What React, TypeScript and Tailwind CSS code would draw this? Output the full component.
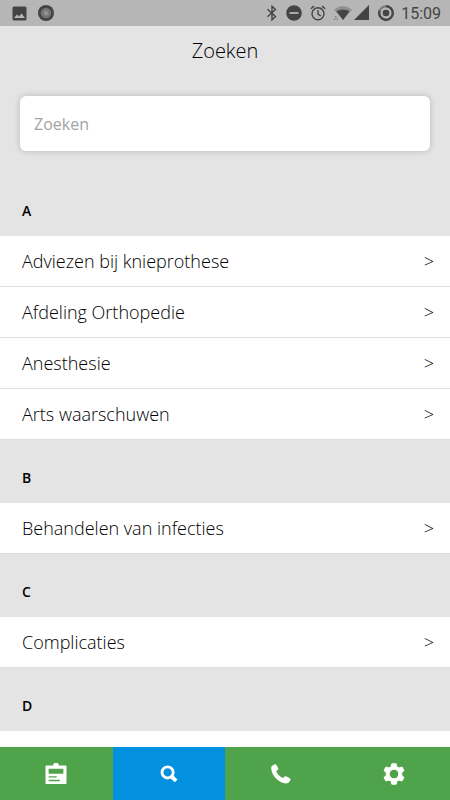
import React from "react";

type Section = { letter: string; items: string[] };

const sections: Section[] = [
  {
    letter: "A",
    items: [
      "Adviezen bij knieprothese",
      "Afdeling Orthopedie",
      "Anesthesie",
      "Arts waarschuwen",
    ],
  },
  { letter: "B", items: ["Behandelen van infecties"] },
  { letter: "C", items: ["Complicaties"] },
  { letter: "D", items: [] },
];

function StatusBar() {
  return (
    <div className="flex h-[26px] shrink-0 items-center justify-between bg-[#b6b6b6] pr-[9px] pl-3 text-[#444444]">
      <div className="flex items-center gap-[11px]">
        <svg className="size-[15px]" viewBox="0 0 15 15" aria-hidden="true">
          <rect x="0.5" y="0.5" width="14" height="14" rx="1.5" fill="currentColor" />
          <path d="M2 12 5 8.5 7 10.5 9.5 7.5 13 12Z" fill="#b6b6b6" />
        </svg>
        <svg className="size-4" viewBox="0 0 16 16" aria-hidden="true">
          <circle cx="8" cy="8" r="8" fill="currentColor" />
          <circle cx="8" cy="8" r="5.3" fill="#747474" />
          <circle cx="8" cy="8" r="2.5" fill="#8f8f8f" />
        </svg>
      </div>
      <div className="flex items-center">
        <svg className="mr-2 h-4 w-3" viewBox="0 0 12 16" fill="none" stroke="currentColor" strokeWidth="1.4" aria-hidden="true">
          <path d="M1.5 4.2 9.5 11.6 6 14.8V1.2L9.5 4.4 1.5 11.8" />
        </svg>
        <svg className="mr-2 size-4" viewBox="0 0 16 16" aria-hidden="true">
          <circle cx="8" cy="8" r="7.8" fill="currentColor" />
          <rect x="3.5" y="7.1" width="9" height="1.8" fill="#b6b6b6" />
        </svg>
        <svg className="mr-2 size-4" viewBox="0 0 16 16" fill="none" stroke="currentColor" strokeWidth="1.4" aria-hidden="true">
          <circle cx="8" cy="8.8" r="6" />
          <path d="M8 5v4.2l2.8 1.7M0.8 3.8 4 1.1M15.2 3.8 12 1.1" />
        </svg>
        <svg className="mr-[2px] h-4 w-[18px]" viewBox="0 0 18 16" aria-hidden="true">
          <path d="M0 4.5Q9-2.5 18 4.5L9 15Z" fill="#8f8f8f" />
          <path d="M2.4 6.3Q9 2.8 15.6 6.3L9 15Z" fill="currentColor" />
          <path d="M1 11h1.5v1.3H1zM0 13.5h1.5v1.3H0zM2.5 13.5H4v1.3H2.5z" fill="#777777" />
        </svg>
        <svg className="mr-[9px] h-4 w-[15px]" viewBox="0 0 15 16" aria-hidden="true">
          <path d="M15 0v15H0Z" fill="currentColor" />
        </svg>
        <svg className="mr-[7px] size-4" viewBox="0 0 16 16" fill="none" aria-hidden="true">
          <circle cx="8" cy="8" r="6.8" stroke="#777777" strokeWidth="2" />
          <path d="M8 1.2A6.8 6.8 0 1 1 1.6 5.7" stroke="currentColor" strokeWidth="2.2" />
          <circle cx="8" cy="8" r="3.3" fill="currentColor" />
        </svg>
        <span className="pt-px font-['Roboto',sans-serif] text-base leading-5">15:09</span>
      </div>
    </div>
  );
}

function ListRow({ label }: { label: string }) {
  return (
    <li>
      <a
        href="#"
        className="flex h-[51px] items-center justify-between border-b border-[#dedede] bg-white pr-4 pl-[22px] text-lg font-[340]"
      >
        <span>{label}</span>
        <span aria-hidden="true">&gt;</span>
      </a>
    </li>
  );
}

function NavBar() {
  const base = "flex items-center justify-center text-white";
  return (
    <nav className="grid h-[53px] shrink-0 grid-cols-4 bg-[#4fa34a]">
      <button type="button" aria-label="Dossier" className={base}>
        <svg className="size-[22px]" viewBox="0 0 22 22" fill="currentColor" aria-hidden="true">
          <path
            fillRule="evenodd"
            d="M1.5 2.6H8.1a2.9 2.9 0 0 1 5.8 0H20.5a1 1 0 0 1 1 1V20a1 1 0 0 1-1 1H1.5a1 1 0 0 1-1-1V3.6a1 1 0 0 1 1-1ZM3.6 5.8v5h14.8v-5ZM3.6 13.3v1.1h8v-1.1ZM3.6 16.8v1.4h11.2v-1.4Z"
          />
        </svg>
      </button>
      <button type="button" aria-label="Zoeken" aria-current="page" className="flex items-center justify-center bg-[#0290df] text-white">
        <svg className="size-[18px]" viewBox="0 0 18 18" fill="none" stroke="currentColor" aria-hidden="true">
          <circle cx="7.6" cy="7.4" r="5.6" strokeWidth="2.8" />
          <path d="m11.5 11.5 4.6 4.4" strokeWidth="4" />
        </svg>
      </button>
      <button type="button" aria-label="Bellen" className={base}>
        <svg className="size-5" viewBox="0 0 20 20" fill="currentColor" aria-hidden="true">
          <path d="M1.2 1.8 3.3.5C4.2 0 5 .2 5.5 1L7.1 4c.4.8.2 1.5-.5 2L5.3 7.2c.9 2.9 3.5 5.5 6.6 6.8l1.5-1.3c.7-.6 1.4-.6 2.2-.2l3.1 1.7c.9.5 1.1 1.3.6 2.1l-1.2 1.8c-.6.9-1.6 1.5-2.9 1.4C7.8 18.9.8 12 .2 4.5.1 3.3.4 2.4 1.2 1.8Z" />
        </svg>
      </button>
      <button type="button" aria-label="Instellingen" className={base}>
        <svg className="size-[22px]" viewBox="0 0 22 22" fill="currentColor" stroke="currentColor" strokeWidth="1" strokeLinejoin="round" aria-hidden="true">
          <path
            fillRule="evenodd"
            d="M8.8.8h4.400l.6 3 2.2 1.200 3-1 2 3.500-2.300 2.200v2.600l2.300 2.200-2 3.500-3-1-2.200 1.200-.6 3H8.800l-.6-3L6 17l-3 1-2-3.500 2.300-2.200V9.700L1 7.500 3 4l3 1 2.200-1.200ZM11 6.200a4.800 4.800 0 1 0 0 9.600 4.800 4.800 0 0 0 0-9.600Z"
          />
        </svg>
      </button>
    </nav>
  );
}

export default function App() {
  return (
    <div className="flex h-screen flex-col overflow-hidden bg-[#e4e4e4] font-['Open_Sans',sans-serif] text-black">
      <StatusBar />
      <header className="flex h-[50px] shrink-0 items-center justify-center">
        <h1 className="text-xl font-[340]">Zoeken</h1>
      </header>
      <main className="flex min-h-0 flex-1 flex-col overflow-hidden">
        <div className="shrink-0 px-5 pt-5 pb-[22px]">
          <input
            type="search"
            aria-label="Zoeken"
            placeholder="Zoeken"
            className="block h-[55px] w-full rounded-md bg-white px-[14px] text-base shadow-[0_0_6px_rgba(0,0,0,0.2)] outline-none placeholder:text-[#a3a3a3]"
          />
        </div>
        {sections.map((section) => (
          <section key={section.letter} className="shrink-0">
            <h2 className="flex h-[63px] items-center pt-3 pl-[22px] text-sm font-semibold">
              {section.letter}
            </h2>
            <ul>
              {section.items.map((item) => (
                <ListRow key={item} label={item} />
              ))}
            </ul>
          </section>
        ))}
        <div className="flex-1 bg-white" />
      </main>
      <NavBar />
    </div>
  );
}
